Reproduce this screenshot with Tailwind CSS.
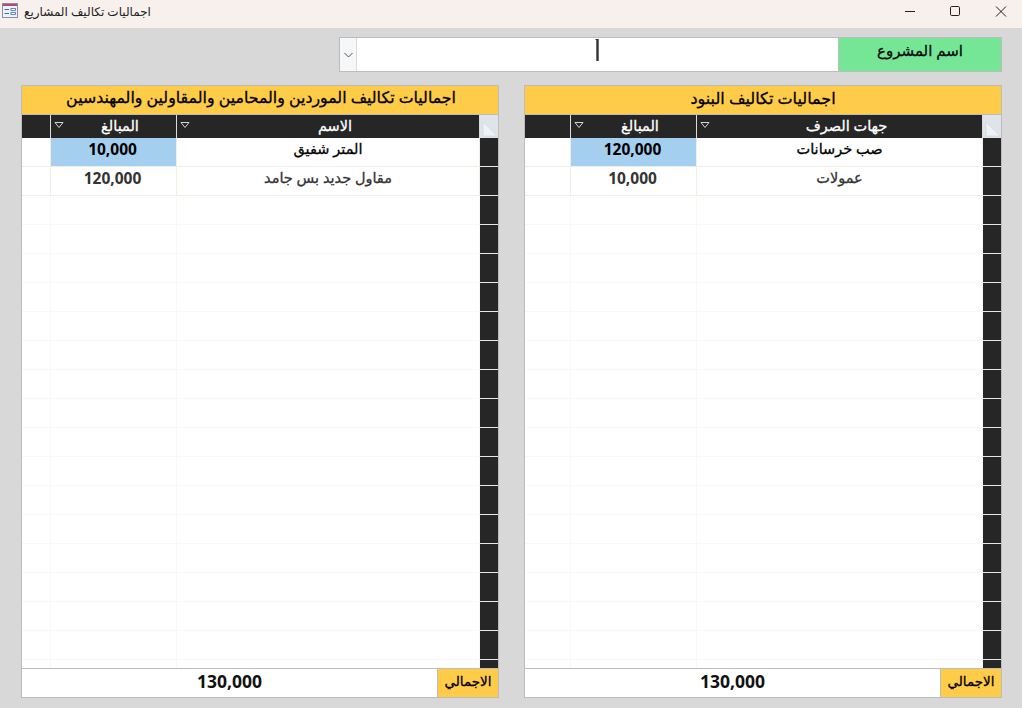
<!DOCTYPE html>
<html lang="ar">
<head>
<meta charset="utf-8">
<script src="https://cdn.jsdelivr.net/npm/@tailwindcss/browser@4"></script>
</head>
<body class="w-[1022px] h-[708px] overflow-hidden bg-[#d8d8d8] font-['Open_Sans','DejaVu_Sans',sans-serif]">
<div class="flex flex-col h-[708px]">
  <!-- title bar -->
  <div class="h-[28px] shrink-0 bg-[#f8f0ed] flex items-start pl-[2px]">
    <svg width="16" height="15" viewBox="0 0 16 15" class="shrink-0 mt-[3px]"><rect x="0.5" y="0.5" width="15" height="14" fill="#eef2fa" stroke="#8a8fa8"/><rect x="1" y="1" width="14" height="2" fill="#b8466e"/><path d="M2.5 6.5h4.5M2.5 10.5h4.5" stroke="#3f6fb5" stroke-width="1.2"/><rect x="9" y="5.5" width="4.5" height="2" fill="#fff" stroke="#3f6fb5" stroke-width="0.8"/><rect x="9" y="9.5" width="4.5" height="2" fill="#fff" stroke="#3f6fb5" stroke-width="0.8"/></svg>
    <span dir="rtl" class="ml-[6px] mt-[3px] text-[12px] leading-[18px] text-[#222]">اجماليات تكاليف المشاريع</span>
    <div class="ml-auto flex">
      <svg width="46" height="28" viewBox="0 0 46 28"><path d="M20 11.5h10" stroke="#222" stroke-width="1"/></svg>
      <svg width="46" height="28" viewBox="0 0 46 28"><rect x="19.5" y="6.5" width="9" height="9" rx="1.2" fill="none" stroke="#222"/></svg>
      <svg width="45" height="28" viewBox="0 0 45 28"><path d="M19 6.5l10 10M29 6.5l-10 10" stroke="#222"/></svg>
    </div>
  </div>

  <!-- project selector -->
  <div class="h-[35px] mt-[9px] ml-[339px] mr-[20px] flex shrink-0">
    <div class="relative flex-1 flex bg-white border border-[#bcbcbc]">
      <div class="w-[17px] h-full bg-[#f6f7f9] border-r border-[#d8dbe0] flex items-center justify-center">
        <svg width="9" height="6" viewBox="0 0 9 6"><path d="M0.5 1l4 4 4-4" fill="none" stroke="#555"/></svg>
      </div>
      <svg width="4" height="24" viewBox="0 0 4 24" class="absolute left-[255px] top-0"><rect x="0.5" y="1" width="1.5" height="1" fill="#333"/><rect x="1.3" y="1" width="2.4" height="22" fill="#333"/></svg>
    </div>
    <div dir="rtl" class="w-[163px] bg-[#75e596] border border-l-0 border-[#bcbcbc] flex items-start justify-center text-[15px] leading-[24px] [-webkit-text-stroke:0.3px_#0a0a0a] text-[#0a0a0a]">اسم المشروع</div>
  </div>

  <!-- panels -->
  <div class="mt-[13px] ml-[21px] mr-[20px] flex justify-between h-[613px] shrink-0">

    <!-- left panel -->
    <div class="w-[478px] flex flex-col border border-[#bcbcbc]">
      <div dir="rtl" class="h-[29px] shrink-0 bg-[#ffcc4a] border-b border-[#bcbcbc] flex items-center justify-start pr-[42px] pb-[5px] text-[15.8px] [-webkit-text-stroke:0.3px_#000] text-black">اجماليات تكاليف الموردين والمحامين والمقاولين والمهندسين</div>
      <div class="h-[23px] shrink-0 bg-[#262626] flex text-white text-[14.5px] [-webkit-text-stroke:0.3px_#fff]">
        <div class="w-[29px] border-r border-[#dcdcdc]"></div>
        <div class="w-[126px] border-r border-[#dcdcdc] relative flex items-center justify-center pl-[13px] pb-[2px]">
          <svg width="10" height="6" viewBox="0 0 10 6" class="absolute left-[3px] top-[7px]"><path d="M1 .5h8l-4 5z" fill="none" stroke="#fff" stroke-width="0.8"/></svg>
          <span dir="rtl">المبالغ</span>
        </div>
        <div class="flex-1 border-r border-[#dcdcdc] relative flex items-center justify-center pl-[14px] pb-[2px]">
          <svg width="10" height="6" viewBox="0 0 10 6" class="absolute left-[3px] top-[7px]"><path d="M1 .5h8l-4 5z" fill="none" stroke="#fff" stroke-width="0.8"/></svg>
          <span dir="rtl">الاسم</span>
        </div>
        <div class="w-[18px] bg-[#dfe3ea] flex items-end justify-end">
          <svg width="16" height="16" viewBox="0 0 16 16"><path d="M1 1l14 14H1z" fill="#eef1f6" stroke="#cfd5de" stroke-width="0.6" transform="translate(0 -1)"/></svg>
        </div>
      </div>
      <div class="flex-1 overflow-hidden bg-white">
        <div class="flex h-[29px]">
          <div class="w-[29px] border-r border-b border-[#eeeee4]"></div>
          <div class="w-[126px] border-r border-b border-[#eeeee4] bg-[#a5cfef] flex items-center justify-center pb-[5px] pr-[2px] text-[15.5px] font-bold text-black">10,000</div>
          <div dir="rtl" class="flex-1 border-r border-b border-[#eeeee4] flex items-center justify-center pb-[6px] text-[14.5px] [-webkit-text-stroke:0.3px_#000] text-black">المتر شفيق</div>
          <div class="w-[18px] bg-[#262626] border-b border-[#e8e8e8]"></div>
        </div>
        <div class="flex h-[29px]">
          <div class="w-[29px] border-r border-b border-[#eeeee4]"></div>
          <div class="w-[126px] border-r border-b border-[#eeeee4] flex items-center justify-center pb-[5px] pr-[2px] text-[15.5px] font-bold text-[#333]">120,000</div>
          <div dir="rtl" class="flex-1 border-r border-b border-[#eeeee4] flex items-center justify-center pb-[6px] text-[14.5px] [-webkit-text-stroke:0.3px_#333] text-[#333]">مقاول جديد بس جامد</div>
          <div class="w-[18px] bg-[#262626] border-b border-[#e8e8e8]"></div>
        </div>
        <div class="flex h-[29px]"><div class="w-[29px] border-r border-b border-[#f8f8f7]"></div><div class="w-[126px] border-r border-b border-[#f8f8f7]"></div><div class="flex-1 border-r border-b border-[#f8f8f7]"></div><div class="w-[18px] bg-[#262626] border-b border-[#e8e8e8]"></div></div>
        <div class="flex h-[29px]"><div class="w-[29px] border-r border-b border-[#f8f8f7]"></div><div class="w-[126px] border-r border-b border-[#f8f8f7]"></div><div class="flex-1 border-r border-b border-[#f8f8f7]"></div><div class="w-[18px] bg-[#262626] border-b border-[#e8e8e8]"></div></div>
        <div class="flex h-[29px]"><div class="w-[29px] border-r border-b border-[#f8f8f7]"></div><div class="w-[126px] border-r border-b border-[#f8f8f7]"></div><div class="flex-1 border-r border-b border-[#f8f8f7]"></div><div class="w-[18px] bg-[#262626] border-b border-[#e8e8e8]"></div></div>
        <div class="flex h-[29px]"><div class="w-[29px] border-r border-b border-[#f8f8f7]"></div><div class="w-[126px] border-r border-b border-[#f8f8f7]"></div><div class="flex-1 border-r border-b border-[#f8f8f7]"></div><div class="w-[18px] bg-[#262626] border-b border-[#e8e8e8]"></div></div>
        <div class="flex h-[29px]"><div class="w-[29px] border-r border-b border-[#f8f8f7]"></div><div class="w-[126px] border-r border-b border-[#f8f8f7]"></div><div class="flex-1 border-r border-b border-[#f8f8f7]"></div><div class="w-[18px] bg-[#262626] border-b border-[#e8e8e8]"></div></div>
        <div class="flex h-[29px]"><div class="w-[29px] border-r border-b border-[#f8f8f7]"></div><div class="w-[126px] border-r border-b border-[#f8f8f7]"></div><div class="flex-1 border-r border-b border-[#f8f8f7]"></div><div class="w-[18px] bg-[#262626] border-b border-[#e8e8e8]"></div></div>
        <div class="flex h-[29px]"><div class="w-[29px] border-r border-b border-[#f8f8f7]"></div><div class="w-[126px] border-r border-b border-[#f8f8f7]"></div><div class="flex-1 border-r border-b border-[#f8f8f7]"></div><div class="w-[18px] bg-[#262626] border-b border-[#e8e8e8]"></div></div>
        <div class="flex h-[29px]"><div class="w-[29px] border-r border-b border-[#f8f8f7]"></div><div class="w-[126px] border-r border-b border-[#f8f8f7]"></div><div class="flex-1 border-r border-b border-[#f8f8f7]"></div><div class="w-[18px] bg-[#262626] border-b border-[#e8e8e8]"></div></div>
        <div class="flex h-[29px]"><div class="w-[29px] border-r border-b border-[#f8f8f7]"></div><div class="w-[126px] border-r border-b border-[#f8f8f7]"></div><div class="flex-1 border-r border-b border-[#f8f8f7]"></div><div class="w-[18px] bg-[#262626] border-b border-[#e8e8e8]"></div></div>
        <div class="flex h-[29px]"><div class="w-[29px] border-r border-b border-[#f8f8f7]"></div><div class="w-[126px] border-r border-b border-[#f8f8f7]"></div><div class="flex-1 border-r border-b border-[#f8f8f7]"></div><div class="w-[18px] bg-[#262626] border-b border-[#e8e8e8]"></div></div>
        <div class="flex h-[29px]"><div class="w-[29px] border-r border-b border-[#f8f8f7]"></div><div class="w-[126px] border-r border-b border-[#f8f8f7]"></div><div class="flex-1 border-r border-b border-[#f8f8f7]"></div><div class="w-[18px] bg-[#262626] border-b border-[#e8e8e8]"></div></div>
        <div class="flex h-[29px]"><div class="w-[29px] border-r border-b border-[#f8f8f7]"></div><div class="w-[126px] border-r border-b border-[#f8f8f7]"></div><div class="flex-1 border-r border-b border-[#f8f8f7]"></div><div class="w-[18px] bg-[#262626] border-b border-[#e8e8e8]"></div></div>
        <div class="flex h-[29px]"><div class="w-[29px] border-r border-b border-[#f8f8f7]"></div><div class="w-[126px] border-r border-b border-[#f8f8f7]"></div><div class="flex-1 border-r border-b border-[#f8f8f7]"></div><div class="w-[18px] bg-[#262626] border-b border-[#e8e8e8]"></div></div>
        <div class="flex h-[29px]"><div class="w-[29px] border-r border-b border-[#f8f8f7]"></div><div class="w-[126px] border-r border-b border-[#f8f8f7]"></div><div class="flex-1 border-r border-b border-[#f8f8f7]"></div><div class="w-[18px] bg-[#262626] border-b border-[#e8e8e8]"></div></div>
        <div class="flex h-[29px]"><div class="w-[29px] border-r border-b border-[#f8f8f7]"></div><div class="w-[126px] border-r border-b border-[#f8f8f7]"></div><div class="flex-1 border-r border-b border-[#f8f8f7]"></div><div class="w-[18px] bg-[#262626] border-b border-[#e8e8e8]"></div></div>
        <div class="flex h-[29px]"><div class="w-[29px] border-r border-b border-[#f8f8f7]"></div><div class="w-[126px] border-r border-b border-[#f8f8f7]"></div><div class="flex-1 border-r border-b border-[#f8f8f7]"></div><div class="w-[18px] bg-[#262626] border-b border-[#e8e8e8]"></div></div>
        <div class="flex h-[29px]"><div class="w-[29px] border-r border-[#f8f8f7]"></div><div class="w-[126px] border-r border-[#f8f8f7]"></div><div class="flex-1 border-r border-[#f8f8f7]"></div><div class="w-[18px] bg-[#262626]"></div></div>
      </div>
      <div class="h-[29px] shrink-0 flex border-t border-[#bcbcbc]">
        <div class="flex-1 bg-white flex items-center justify-center pb-[4px] text-[17.5px] font-bold text-[#111]">130,000</div>
        <div dir="rtl" class="w-[61px] bg-[#ffcc4a] border-l border-[#bcbcbc] flex items-center justify-center pb-[4px] text-[13.5px] [-webkit-text-stroke:0.3px_#000] text-black">الاجمالي</div>
      </div>
    </div>

    <!-- right panel -->
    <div class="w-[478px] flex flex-col border border-[#bcbcbc]">
      <div dir="rtl" class="h-[29px] shrink-0 bg-[#ffcc4a] border-b border-[#bcbcbc] flex items-center justify-center pb-[5px] text-[16px] [-webkit-text-stroke:0.3px_#000] text-black">اجماليات تكاليف البنود</div>
      <div class="h-[23px] shrink-0 bg-[#262626] flex text-white text-[14.5px] [-webkit-text-stroke:0.3px_#fff]">
        <div class="w-[46px] border-r border-[#dcdcdc]"></div>
        <div class="w-[126px] border-r border-[#dcdcdc] relative flex items-center justify-center pl-[13px] pb-[2px]">
          <svg width="10" height="6" viewBox="0 0 10 6" class="absolute left-[3px] top-[7px]"><path d="M1 .5h8l-4 5z" fill="none" stroke="#fff" stroke-width="0.8"/></svg>
          <span dir="rtl">المبالغ</span>
        </div>
        <div class="flex-1 border-r border-[#dcdcdc] relative flex items-center justify-center pl-[14px] pb-[2px]">
          <svg width="10" height="6" viewBox="0 0 10 6" class="absolute left-[3px] top-[7px]"><path d="M1 .5h8l-4 5z" fill="none" stroke="#fff" stroke-width="0.8"/></svg>
          <span dir="rtl">جهات الصرف</span>
        </div>
        <div class="w-[18px] bg-[#dfe3ea] flex items-end justify-end">
          <svg width="16" height="16" viewBox="0 0 16 16"><path d="M1 1l14 14H1z" fill="#eef1f6" stroke="#cfd5de" stroke-width="0.6" transform="translate(0 -1)"/></svg>
        </div>
      </div>
      <div class="flex-1 overflow-hidden bg-white">
        <div class="flex h-[29px]">
          <div class="w-[46px] border-r border-b border-[#eeeee4]"></div>
          <div class="w-[126px] border-r border-b border-[#eeeee4] bg-[#a5cfef] flex items-center justify-center pb-[5px] pr-[2px] text-[15.5px] font-bold text-black">120,000</div>
          <div dir="rtl" class="flex-1 border-r border-b border-[#eeeee4] flex items-center justify-center pb-[6px] text-[14.5px] [-webkit-text-stroke:0.3px_#000] text-black">صب خرسانات</div>
          <div class="w-[18px] bg-[#262626] border-b border-[#e8e8e8]"></div>
        </div>
        <div class="flex h-[29px]">
          <div class="w-[46px] border-r border-b border-[#eeeee4]"></div>
          <div class="w-[126px] border-r border-b border-[#eeeee4] flex items-center justify-center pb-[5px] pr-[2px] text-[15.5px] font-bold text-[#333]">10,000</div>
          <div dir="rtl" class="flex-1 border-r border-b border-[#eeeee4] flex items-center justify-center pb-[6px] text-[14.5px] [-webkit-text-stroke:0.3px_#333] text-[#333]">عمولات</div>
          <div class="w-[18px] bg-[#262626] border-b border-[#e8e8e8]"></div>
        </div>
        <div class="flex h-[29px]"><div class="w-[46px] border-r border-b border-[#f8f8f7]"></div><div class="w-[126px] border-r border-b border-[#f8f8f7]"></div><div class="flex-1 border-r border-b border-[#f8f8f7]"></div><div class="w-[18px] bg-[#262626] border-b border-[#e8e8e8]"></div></div>
        <div class="flex h-[29px]"><div class="w-[46px] border-r border-b border-[#f8f8f7]"></div><div class="w-[126px] border-r border-b border-[#f8f8f7]"></div><div class="flex-1 border-r border-b border-[#f8f8f7]"></div><div class="w-[18px] bg-[#262626] border-b border-[#e8e8e8]"></div></div>
        <div class="flex h-[29px]"><div class="w-[46px] border-r border-b border-[#f8f8f7]"></div><div class="w-[126px] border-r border-b border-[#f8f8f7]"></div><div class="flex-1 border-r border-b border-[#f8f8f7]"></div><div class="w-[18px] bg-[#262626] border-b border-[#e8e8e8]"></div></div>
        <div class="flex h-[29px]"><div class="w-[46px] border-r border-b border-[#f8f8f7]"></div><div class="w-[126px] border-r border-b border-[#f8f8f7]"></div><div class="flex-1 border-r border-b border-[#f8f8f7]"></div><div class="w-[18px] bg-[#262626] border-b border-[#e8e8e8]"></div></div>
        <div class="flex h-[29px]"><div class="w-[46px] border-r border-b border-[#f8f8f7]"></div><div class="w-[126px] border-r border-b border-[#f8f8f7]"></div><div class="flex-1 border-r border-b border-[#f8f8f7]"></div><div class="w-[18px] bg-[#262626] border-b border-[#e8e8e8]"></div></div>
        <div class="flex h-[29px]"><div class="w-[46px] border-r border-b border-[#f8f8f7]"></div><div class="w-[126px] border-r border-b border-[#f8f8f7]"></div><div class="flex-1 border-r border-b border-[#f8f8f7]"></div><div class="w-[18px] bg-[#262626] border-b border-[#e8e8e8]"></div></div>
        <div class="flex h-[29px]"><div class="w-[46px] border-r border-b border-[#f8f8f7]"></div><div class="w-[126px] border-r border-b border-[#f8f8f7]"></div><div class="flex-1 border-r border-b border-[#f8f8f7]"></div><div class="w-[18px] bg-[#262626] border-b border-[#e8e8e8]"></div></div>
        <div class="flex h-[29px]"><div class="w-[46px] border-r border-b border-[#f8f8f7]"></div><div class="w-[126px] border-r border-b border-[#f8f8f7]"></div><div class="flex-1 border-r border-b border-[#f8f8f7]"></div><div class="w-[18px] bg-[#262626] border-b border-[#e8e8e8]"></div></div>
        <div class="flex h-[29px]"><div class="w-[46px] border-r border-b border-[#f8f8f7]"></div><div class="w-[126px] border-r border-b border-[#f8f8f7]"></div><div class="flex-1 border-r border-b border-[#f8f8f7]"></div><div class="w-[18px] bg-[#262626] border-b border-[#e8e8e8]"></div></div>
        <div class="flex h-[29px]"><div class="w-[46px] border-r border-b border-[#f8f8f7]"></div><div class="w-[126px] border-r border-b border-[#f8f8f7]"></div><div class="flex-1 border-r border-b border-[#f8f8f7]"></div><div class="w-[18px] bg-[#262626] border-b border-[#e8e8e8]"></div></div>
        <div class="flex h-[29px]"><div class="w-[46px] border-r border-b border-[#f8f8f7]"></div><div class="w-[126px] border-r border-b border-[#f8f8f7]"></div><div class="flex-1 border-r border-b border-[#f8f8f7]"></div><div class="w-[18px] bg-[#262626] border-b border-[#e8e8e8]"></div></div>
        <div class="flex h-[29px]"><div class="w-[46px] border-r border-b border-[#f8f8f7]"></div><div class="w-[126px] border-r border-b border-[#f8f8f7]"></div><div class="flex-1 border-r border-b border-[#f8f8f7]"></div><div class="w-[18px] bg-[#262626] border-b border-[#e8e8e8]"></div></div>
        <div class="flex h-[29px]"><div class="w-[46px] border-r border-b border-[#f8f8f7]"></div><div class="w-[126px] border-r border-b border-[#f8f8f7]"></div><div class="flex-1 border-r border-b border-[#f8f8f7]"></div><div class="w-[18px] bg-[#262626] border-b border-[#e8e8e8]"></div></div>
        <div class="flex h-[29px]"><div class="w-[46px] border-r border-b border-[#f8f8f7]"></div><div class="w-[126px] border-r border-b border-[#f8f8f7]"></div><div class="flex-1 border-r border-b border-[#f8f8f7]"></div><div class="w-[18px] bg-[#262626] border-b border-[#e8e8e8]"></div></div>
        <div class="flex h-[29px]"><div class="w-[46px] border-r border-b border-[#f8f8f7]"></div><div class="w-[126px] border-r border-b border-[#f8f8f7]"></div><div class="flex-1 border-r border-b border-[#f8f8f7]"></div><div class="w-[18px] bg-[#262626] border-b border-[#e8e8e8]"></div></div>
        <div class="flex h-[29px]"><div class="w-[46px] border-r border-b border-[#f8f8f7]"></div><div class="w-[126px] border-r border-b border-[#f8f8f7]"></div><div class="flex-1 border-r border-b border-[#f8f8f7]"></div><div class="w-[18px] bg-[#262626] border-b border-[#e8e8e8]"></div></div>
        <div class="flex h-[29px]"><div class="w-[46px] border-r border-[#f8f8f7]"></div><div class="w-[126px] border-r border-[#f8f8f7]"></div><div class="flex-1 border-r border-[#f8f8f7]"></div><div class="w-[18px] bg-[#262626]"></div></div>
      </div>
      <div class="h-[29px] shrink-0 flex border-t border-[#bcbcbc]">
        <div class="flex-1 bg-white flex items-center justify-center pb-[4px] text-[17.5px] font-bold text-[#111]">130,000</div>
        <div dir="rtl" class="w-[61px] bg-[#ffcc4a] border-l border-[#bcbcbc] flex items-center justify-center pb-[4px] text-[13.5px] [-webkit-text-stroke:0.3px_#000] text-black">الاجمالي</div>
      </div>
    </div>
  </div>
</div>
</body>
</html>
